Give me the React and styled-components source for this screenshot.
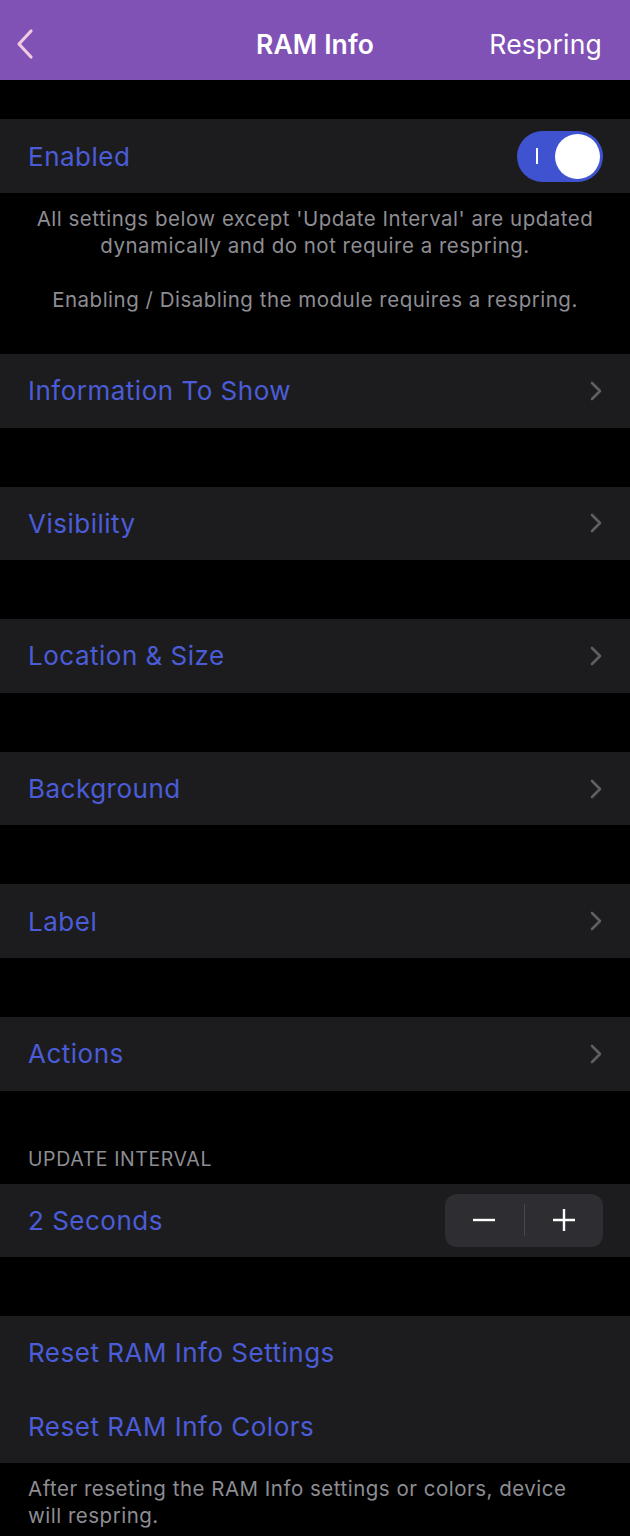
import styled, { createGlobalStyle } from 'styled-components'

const GlobalStyle = createGlobalStyle`
  html, body {
    margin: 0;
    padding: 0;
    background: #000;
  }
  body {
    font-family: Inter, "Noto Sans", "Liberation Sans", sans-serif;
    -webkit-font-smoothing: antialiased;
  }
  * {
    box-sizing: border-box;
  }
`

const Page = styled.div`
  width: 630px;
  min-height: 1536px;
  background: #000;
`

const NavBar = styled.header`
  height: 80px;
  background: #8152b5;
  display: grid;
  grid-template-columns: 1fr auto 1fr;
  align-items: center;
  padding: 7px 28px 0 28px;
`

const BackButton = styled.span`
  display: flex;
  align-items: center;
  margin-left: -16px;
`

const NavTitle = styled.h1`
  margin: 0;
  font-size: 26.5px;
  font-weight: 600;
  color: #fff;
  letter-spacing: 0.1px;
`

const NavAction = styled.span`
  justify-self: end;
  font-size: 26.5px;
  color: #fff;
  letter-spacing: 0.2px;
`

const Group = styled.section`
  margin-top: ${p => p.$top || 0}px;
  background: #1c1c1e;
`

const Row = styled.div`
  height: ${p => p.$h || 73.6}px;
  display: flex;
  align-items: center;
  justify-content: space-between;
  padding: 0 27px 0 28px;
`

const Label = styled.span`
  font-size: 26px;
  color: #4b5cd8;
  letter-spacing: 0.5px;
`

const Toggle = styled.span`
  width: 86px;
  height: 51px;
  border-radius: 26px;
  background: #3f53d0;
  display: flex;
  align-items: center;
  justify-content: space-between;
  padding: 0 3px 0 19px;
`

const ToggleMark = styled.span`
  width: 2px;
  height: 16px;
  background: #fff;
`

const Knob = styled.span`
  width: 45px;
  height: 45px;
  border-radius: 50%;
  background: #fff;
`

const Footer = styled.p`
  margin: 0;
  padding: ${p => p.$pad || '12px 28px 0'};
  font-size: 20.5px;
  line-height: 27px;
  color: #8d8d93;
  text-align: ${p => p.$align || 'left'};
  letter-spacing: 0.5px;
`

const SectionHeader = styled.div`
  margin-top: 56px;
  padding: 0 28px 13px;
  font-size: 19.5px;
  color: #8d8d93;
  letter-spacing: 0.6px;
`

const Stepper = styled.div`
  width: 158px;
  height: 53px;
  border-radius: 12px;
  background: #2e2e32;
  display: flex;
  align-items: center;
`

const StepButton = styled.span`
  flex: 1;
  display: flex;
  align-items: center;
  justify-content: center;
`

const StepDivider = styled.span`
  width: 1px;
  height: 32px;
  background: #48484c;
`

function Chevron() {
  return (
    <svg width="14" height="22" viewBox="0 0 14 22">
      <path d="M3 3 L11 11 L3 19" fill="none" stroke="#5e5e63" strokeWidth="2.6" strokeLinecap="round" strokeLinejoin="round" />
    </svg>
  )
}

function NavRow({ label, top }) {
  return (
    <Group $top={top}>
      <Row>
        <Label>{label}</Label>
        <Chevron />
      </Row>
    </Group>
  )
}

const sections = ['Information To Show', 'Visibility', 'Location & Size', 'Background', 'Label', 'Actions']

export default function App() {
  return (
    <Page>
      <GlobalStyle />
      <NavBar>
        <BackButton>
          <svg width="26" height="34" viewBox="0 0 26 34">
            <path d="M19 4 L7 17 L19 30" fill="none" stroke="#f2c9df" strokeWidth="3.2" strokeLinecap="round" strokeLinejoin="round" />
          </svg>
        </BackButton>
        <NavTitle>RAM Info</NavTitle>
        <NavAction>Respring</NavAction>
      </NavBar>

      <Group $top={39}>
        <Row $h={74}>
          <Label>Enabled</Label>
          <Toggle>
            <ToggleMark />
            <Knob />
          </Toggle>
        </Row>
      </Group>
      <Footer $align="center" $pad="12px 20px 0">
        All settings below except 'Update Interval' are updated dynamically and do not require a respring.
        <br />
        <br />
        Enabling / Disabling the module requires a respring.
      </Footer>

      {sections.map((s, i) => (
        <NavRow key={s} label={s} top={i === 0 ? 41 : 59} />
      ))}

      <SectionHeader>UPDATE INTERVAL</SectionHeader>
      <Group>
        <Row>
          <Label>2 Seconds</Label>
          <Stepper>
            <StepButton>
              <svg width="26" height="26" viewBox="0 0 26 26">
                <path d="M2 13 H24" stroke="#fff" strokeWidth="2.4" />
              </svg>
            </StepButton>
            <StepDivider />
            <StepButton>
              <svg width="26" height="26" viewBox="0 0 26 26">
                <path d="M2 13 H24 M13 2 V24" stroke="#fff" strokeWidth="2.4" />
              </svg>
            </StepButton>
          </Stepper>
        </Row>
      </Group>

      <Group $top={59}>
        <Row>
          <Label>Reset RAM Info Settings</Label>
        </Row>
        <Row>
          <Label>Reset RAM Info Colors</Label>
        </Row>
      </Group>
      <Footer $pad="12px 24px 0 28px">
        After reseting the RAM Info settings or colors, device will respring.
      </Footer>
    </Page>
  )
}
